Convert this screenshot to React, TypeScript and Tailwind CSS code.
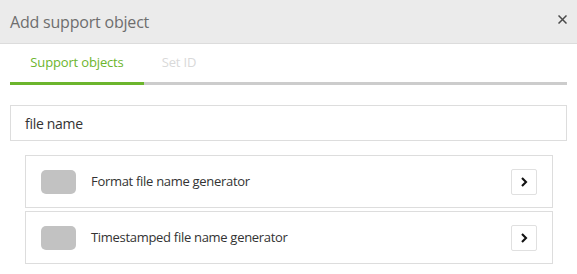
import React from "react";

const font = { fontFamily: '"Open Sans", "Noto Sans", sans-serif' };

function Chevron() {
  return (
    <svg width="10" height="10" viewBox="0 0 10 10" fill="none">
      <path d="M3 1 L7 5 L3 9" stroke="#111" strokeWidth="2.1" strokeLinecap="butt" strokeLinejoin="miter" />
    </svg>
  );
}

function Item({ label }: { label: string }) {
  return (
    <div className="flex h-[53px] items-center border border-[#dddddd] pl-[15px] pr-[15px]">
      <div className="h-[24px] w-[35px] rounded-[5px] bg-[#c2c2c2]" />
      <div className="ml-[15px] flex-1 text-[13px] tracking-[-0.3px] text-[#333333]">{label}</div>
      <button className="flex h-[26px] w-[26px] items-center justify-center rounded-[2px] border border-[#e0e0e0] bg-white">
        <Chevron />
      </button>
    </div>
  );
}

export default function App() {
  return (
    <div className="h-[274px] w-[577px] overflow-hidden bg-white" style={font}>
      <div className="flex h-[44px] items-center justify-between border-b border-[#dcdcdc] bg-[#ebebeb] pl-[10px] pr-[10px]">
        <div className="text-[16px] tracking-[-0.2px] text-[#6e6e6e]">Add support object</div>
        <svg width="9" height="9" viewBox="0 0 9 9" className="mb-[4px]">
          <path d="M0.5 0.5 L8.5 8.5 M8.5 0.5 L0.5 8.5" stroke="#4a4a4a" strokeWidth="1.5" />
        </svg>
      </div>
      <div className="px-[10px]">
        <div className="flex h-[41px] border-b-[3px] border-[#cccccc]">
          <div className="-mb-[3px] flex w-[134px] items-center justify-center border-b-[3px] border-[#6cb52d] text-[13px] tracking-[-0.15px] text-[#6cb52d]">
            Support objects
          </div>
          <div className="flex w-[70px] items-center justify-center text-[13px] tracking-[-0.15px] text-[#d9d9d9]">Set ID</div>
        </div>
        <div className="mt-[20px] flex h-[36px] items-center border border-[#dddddd] px-[14px] text-[14px] tracking-[-0.3px] text-[#333333]">
          file name
        </div>
        <div className="mt-[14px] flex flex-col gap-[3px] pl-[15px] pr-[14px]">
          <Item label="Format file name generator" />
          <Item label="Timestamped file name generator" />
        </div>
      </div>
    </div>
  );
}
